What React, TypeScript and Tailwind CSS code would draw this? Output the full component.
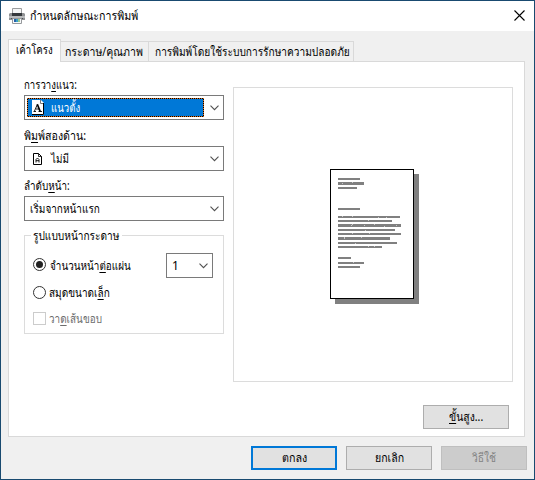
import { ReactNode, useLayoutEffect, useRef } from 'react';

/** One line of text, condensed or widened to the width its label has in the dialog. */
function Label({ w, className = '', children }: { w: number; className?: string; children: ReactNode }) {
  const ref = useRef<HTMLSpanElement>(null);
  useLayoutEffect(() => {
    const el = ref.current;
    if (el && el.offsetWidth) el.style.transform = `scaleX(${w / el.offsetWidth})`;
  }, [w]);
  return (
    <span className={`block h-[18px] shrink-0 ${className}`} style={{ width: w }}>
      <span ref={ref} className="inline-block origin-left whitespace-nowrap leading-[18px]">
        {children}
      </span>
    </span>
  );
}

function Key({ children }: { children: ReactNode }) {
  return <span className="underline decoration-1 underline-offset-2">{children}</span>;
}

function Chevron() {
  return (
    <svg className="ml-auto mr-[4px] shrink-0" width="9" height="6" viewBox="0 0 9 6" fill="none" stroke="#505050" strokeWidth="1.1">
      <path d="M.5 .7 4.5 4.7 8.5 .7" />
    </svg>
  );
}

function Printer() {
  return (
    <svg width="16" height="16" viewBox="0 0 16 16" className="shrink-0">
      <path d="M3.500 .5h9v6h-9z" fill="#f4f5f6" stroke="#9a9c9e" />
      <path d="M0 6l1-1h14l1 1v6H0z" fill="#909294" />
      <path d="M3 5h10v3H3z" fill="#34383c" />
      <path d="M0 8h16v2H0z" fill="#b9bbbd" />
      <path d="M2 10h12v1H2z" fill="#4b4e51" />
      <path d="M3.500 10.500h9v5h-9z" fill="#f7f8f9" stroke="#96999c" />
      <path d="M5 11h2v3H5z" fill="#2460a8" />
      <path d="M7 11h2v3H7z" fill="#38a0c8" />
      <path d="M9 11h2v3H9z" fill="#9cc98a" />
    </svg>
  );
}

function PageIcon({ small = false }: { small?: boolean }) {
  return small ? (
    <svg width="9" height="12" viewBox="0 0 9 12" className="shrink-0">
      <path d="M.5 .5h5l3 3v8h-8z" fill="#fff" stroke="#000" />
      <path d="M5.500 .5v3h3" fill="none" stroke="#000" strokeWidth=".8" />
      <path d="M3 9.500V6.500L4.500 5 6 6.500V9.500M3 7.700h3" fill="none" stroke="#000" strokeWidth=".9" />
    </svg>
  ) : (
    <svg width="12" height="15" viewBox="0 0 12 15" className="shrink-0">
      <path d="M0 0h9l3 3v12H0z" fill="#fff" />
      <path d="M8.500 0v3.500H12" fill="none" stroke="#777" />
      <path d="M11.500 3v11.500H0" fill="none" stroke="#000" />
      <path d="M2.500 11 5.300 4.500M4 9h3.500M1.500 11.500h2.500M6.500 11.500h3.500" fill="none" stroke="#000" strokeWidth=".9" />
      <path d="M5.300 4.300 8.200 11.500" fill="none" stroke="#000" strokeWidth="1.700" />
    </svg>
  );
}

const lines = [
  [18, 18, 22, 2], [18, 22, 26, 3], [18, 27, 19, 2], [18, 48, 22, 2],
  [18, 56, 62, 2], [18, 60, 54, 2], [18, 64, 63, 3], [18, 69, 57, 2],
  [18, 73, 63, 2], [18, 77, 52, 3], [18, 82, 59, 2], [18, 86, 44, 2],
  [18, 97, 13, 2], [18, 102, 26, 2], [18, 106, 22, 2],
];
const specks = [
  [22, 23], [32, 22], [22, 56], [32, 56], [58, 57], [66, 57], [48, 60], [31, 65], [32, 64],
  [44, 65], [54, 64], [64, 66], [76, 65], [45, 70], [32, 73], [49, 73], [24, 77], [24, 78],
  [41, 77], [35, 83], [48, 86], [54, 86], [33, 102],
];

function Preview() {
  return (
    <svg width="110" height="150" viewBox="0 0 110 150" shapeRendering="crispEdges">
      <path d="M15 14h84v130H15z" fill="#808080" />
      <path d="M10.500 9.500h83v129h-83z" fill="#fff" stroke="#000" />
      {lines.map(([x, y, w, h]) => <rect key={y} x={x} y={y} width={w} height={h} fill="#808080" />)}
      {specks.map(([x, y]) => <rect key={`${x}-${y}`} x={x} y={y} width="1" height="1" fill="#c8c8c8" />)}
    </svg>
  );
}

const combo = 'flex h-[25px] items-center border border-[#7a7a7a] bg-white';
const button = 'flex h-[24px] w-[86px] items-center justify-center';

export default function App() {
  return (
    <div className="flex h-[480px] w-[535px] flex-col overflow-hidden border border-[#194a70] bg-[#f0f0f0] font-['Noto_Sans','Loma',sans-serif] text-[12px] text-black">
      <header className="flex h-[30px] shrink-0 items-center bg-white pl-[8px] pr-[9px]">
        <Printer />
        <Label w={108} className="ml-[5px]">กำหนดลักษณะการพิมพ์</Label>
        <svg className="-mt-px ml-auto" width="11" height="11" viewBox="0 0 11 11" stroke="#000" strokeWidth="1.100">
          <path d="M.5 .5l10 10M10.500 .5l-10 10" />
        </svg>
      </header>

      <nav className="flex h-[30px] shrink-0 items-end pl-[7px]">
        <div className="z-10 -mb-px flex h-[23px] w-[53px] items-start border border-b-0 border-[#d9d9d9] bg-white pl-[7px] pt-[1px]">
          <Label w={37}>เค้าโครง</Label>
        </div>
        <div className="flex h-[20px] w-[88px] items-center border-r border-t border-[#d9d9d9] pl-[4px]">
          <Label w={78}>กระดาษ/คุณภาพ</Label>
        </div>
        <div className="flex h-[20px] w-[205px] items-center border-r border-t border-[#d9d9d9] pl-[6px]">
          <Label w={195}>การพิมพ์โดยใช้ระบบการรักษาความปลอดภัย</Label>
        </div>
      </nav>

      <main className="ml-[7px] flex h-[376px] w-[517px] shrink-0 border border-[#d9d9d9] bg-white pl-[15px]">
        <section className="w-[200px] pt-[14px]">
          <Label w={53}>การวา<Key>ง</Key>แนว:</Label>
          <div className={`${combo} mt-[1px]`}>
            <div className="ml-[2px] flex h-[19px] w-[177px] border border-dotted border-[#d87020] bg-black">
              <div className="flex flex-1 items-center bg-[#0078d7] pl-[4px] text-white">
                <PageIcon />
                <Label w={29} className="ml-[7px]">แนวตั้ง</Label>
              </div>
            </div>
            <Chevron />
          </div>
          <Label w={62} className="mt-[7px]">พิ<Key>ม</Key>พ์สองด้าน:</Label>
          <div className={`${combo} mt-[1px] pl-[8px]`}>
            <PageIcon small />
            <Label w={18} className="ml-[9px]">ไม่มี</Label>
            <Chevron />
          </div>
          <Label w={46} className="mt-[6px]">ลำดับ<Key>ห</Key>น้า:</Label>
          <div className={`${combo} mt-[1px] pl-[5px]`}>
            <Label w={70}>เริ่มจากหน้าแรก</Label>
            <Chevron />
          </div>
          <fieldset className="mt-[14px] h-[99px] border border-[#dcdcdc] pl-[8px]">
            <div className="-mt-[9px] ml-[-2px] w-[91px] bg-white pl-[2px]">
              <Label w={86}>รูปแบบหน้ากระดาษ</Label>
            </div>
            <div className="mt-[8px] flex h-[25px] items-center">
              <span className="flex size-[13px] -translate-y-px items-center justify-center rounded-full border border-[#333]">
                <span className="size-[7px] rounded-full bg-[#222]" />
              </span>
              <Label w={81} className="ml-[4px]">จำนวนหน้า<Key>ต่</Key>อแผ่น</Label>
              <div className={`${combo} ml-auto mr-[10px] w-[47px] pl-[5px]`}>
                <Label w={7}>1</Label>
                <Chevron />
              </div>
            </div>
            <div className="mt-[5px] flex h-[20px] items-center">
              <span className="size-[13px] -translate-y-px rounded-full border border-[#333]" />
              <Label w={61} className="ml-[3px]">สมุดขนาดเ<Key>ล็</Key>ก</Label>
            </div>
            <div className="mt-[6px] flex h-[20px] items-center text-[#6d6d6d]">
              <span className="size-[13px] -translate-y-px border border-[#ccc]" />
              <Label w={53} className="ml-[3px]">วา<Key>ด</Key>เส้นขอบ</Label>
            </div>
          </fieldset>
        </section>
        <section className="ml-[9px] flex w-[280px] flex-col pt-[25px]">
          <div className="h-[295px] border border-[#dcdcdc] pl-[86px] pt-[72px]">
            <Preview />
          </div>
          <button className={`${button} ml-auto mr-[4px] mt-[23px] border border-[#adadad] bg-[#e1e1e1]`}>
            <Label w={34}><Key>ขั้</Key>นสูง...</Label>
          </button>
        </section>
      </main>

      <footer className="flex gap-[9px] pl-[250px] pt-[9px]">
        <button className={`${button} border-2 border-[#0078d7] bg-[#e1e1e1]`}><Label w={25}>ตกลง</Label></button>
        <button className={`${button} border border-[#adadad] bg-[#e1e1e1]`}><Label w={29}>ยกเลิก</Label></button>
        <button className={`${button} border border-[#bfbfbf] bg-[#ccc] text-[#838383]`}><Label w={24}>วิธีใช้</Label></button>
      </footer>
    </div>
  );
}
